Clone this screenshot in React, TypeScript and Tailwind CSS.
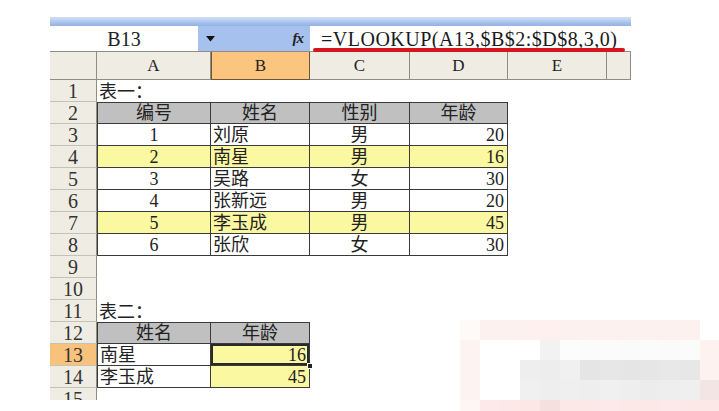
import React from "react";

type Cell = {
  t?: string;
  align?: "l" | "c" | "r";
  fill?: "head" | "yellow";
  box?: boolean;
  top?: boolean;
  sel?: boolean;
};

const colW = ["w-[114px]", "w-[99px]", "w-[100px]", "w-[98px]", "w-[99px]", "w-[24px]"];
const colNames = ["A", "B", "C", "D", "E", ""];

const font = "font-['Liberation_Serif','Noto_Sans_CJK_SC',serif]";

const table1 = [
  ["1", "刘原", "男", "20"],
  ["2", "南星", "男", "16"],
  ["3", "吴路", "女", "30"],
  ["4", "张新远", "男", "20"],
  ["5", "李玉成", "男", "45"],
  ["6", "张欣", "女", "30"],
];

function buildRows(): Cell[][] {
  const rows: Cell[][] = [];
  rows.push([{ t: "表一：", align: "l" }]);
  rows.push(
    ["编号", "姓名", "性别", "年龄"].map((t) => ({ t, align: "c", fill: "head", box: true, top: true }) as Cell)
  );
  table1.forEach((r, idx) => {
    const yellow = idx === 1 || idx === 4;
    rows.push([
      { t: r[0], align: "c", box: true, fill: yellow ? "yellow" : undefined },
      { t: r[1], align: "l", box: true, fill: yellow ? "yellow" : undefined },
      { t: r[2], align: "c", box: true, fill: yellow ? "yellow" : undefined },
      { t: r[3], align: "r", box: true, fill: yellow ? "yellow" : undefined },
    ]);
  });
  rows.push([]);
  rows.push([]);
  rows.push([{ t: "表二：", align: "l" }]);
  rows.push([
    { t: "姓名", align: "c", fill: "head", box: true, top: true },
    { t: "年龄", align: "c", fill: "head", box: true, top: true },
  ]);
  rows.push([
    { t: "南星", align: "l", box: true },
    { t: "16", align: "r", fill: "yellow", box: true, sel: true },
  ]);
  rows.push([
    { t: "李玉成", align: "l", box: true },
    { t: "45", align: "r", fill: "yellow", box: true },
  ]);
  rows.push([]);
  return rows;
}

function SheetCell({ c, i }: { c?: Cell; i: number }) {
  let cls = `${colW[i]} shrink-0 h-full flex items-end pb-[1px] leading-none relative text-[18px] text-[#222] ${font}`;
  if (c?.align === "l") cls += " justify-start pl-[2px]";
  if (c?.align === "c") cls += " justify-center";
  if (c?.align === "r") cls += " justify-end pr-[3px]";
  if (c?.fill === "head") cls += " bg-[#c0c0c0]";
  else if (c?.fill === "yellow") cls += " bg-[#fbf8a2]";
  else cls += " bg-white";
  if (c?.box) {
    cls += " border-r border-b border-[#3a3a3a]";
    if (c.top) cls += " border-t";
    if (i === 0) cls += " border-l";
  }
  return (
    <div className={cls}>
      {c?.t}
      {c?.sel && (
        <>
          <span className="absolute inset-0 shadow-[inset_0_0_0_2px_#2a2a2a]" />
          <span className="absolute -right-[4px] -bottom-[4px] w-[6px] h-[6px] bg-[#222] border border-white z-10" />
        </>
      )}
    </div>
  );
}

const mosaic: string[][] = [
  ["#fefaf8", "#fdf1f0", "#fdf1f0", "#fdf0ef", "#fdf0ef", "#fdf1f0", "#fdf1f0", "#fdf0ef", "#fdf1f0", "#fdf1f0", "#fdf0ef", "#fdf1f0", "#ffffff"],
  ["#fdf4f2", "#ffffff", "#ffffff", "#ffffff", "#f2f2f2", "#fcfcfc", "#fbfbfb", "#fbfbfb", "#fafafa", "#fbfbfb", "#fafafa", "#fbfbfb", "#fdf2f0"],
  ["#fdf4f2", "#ffffff", "#ffffff", "#eeeeee", "#ededed", "#f0f0f0", "#e5e5e5", "#e7e7e7", "#e5e5e5", "#e6e6e6", "#e8e8e8", "#e7e7e7", "#fdf2f0"],
  ["#fdf4f2", "#ffffff", "#ffffff", "#f0f0f0", "#eeeeee", "#efefef", "#eeeeee", "#f0f0f0", "#eeeeee", "#ececec", "#eeeeee", "#efefef", "#f2e5e3"],
  ["#fdf6f4", "#fde9e9", "#fde8e8", "#fce6e6", "#f6dfdf", "#fde8e8", "#fde8e8", "#fde9e9", "#fde8e8", "#fde8e8", "#fde9e9", "#fde8e8", "#fde8e8"],
];

export default function App() {
  const rows = buildRows();
  return (
    <div className="relative w-[719px] h-[411px] bg-white overflow-hidden pl-[50px] pt-[17px]">
      <div className="w-[581px] h-[383px] overflow-hidden flex flex-col">
        {/* window top edge */}
        <div className="h-[9px] shrink-0 bg-linear-to-b from-[#d3e0f5] to-[#90b0e6]" />

        {/* formula bar */}
        <div className="relative h-[26px] shrink-0 flex border-b border-[#8f8d82]">
          <div className={`w-[148px] bg-white flex items-center justify-center text-[20px] text-[#222] ${font}`}>
            B13
          </div>
          <div className="w-[112px] bg-[#a7c1ee] flex items-center justify-between pl-[8px] pr-[7px]">
            <svg width="9" height="6" viewBox="0 0 9 6">
              <path d="M0 0 L9 0 L4.5 5.5 Z" fill="#111" />
            </svg>
            <span className="font-['Liberation_Serif',serif] italic font-bold text-[15px] text-[#222] tracking-[-1px]">fx</span>
          </div>
          <div
            className={`flex-1 bg-white flex items-center pl-[11px] text-[20px] tracking-[0.5px] text-[#1a1a1a] ${font}`}
          >
            =VLOOKUP(A13,$B$2:$D$8,3,0)
          </div>
          <span className="absolute left-[263px] top-[22px] w-[312px] h-[4px] bg-[#d6161d] rounded-full z-10" />
        </div>

        {/* column headers */}
        <div className="h-[28px] shrink-0 flex">
          <div className="w-[47px] shrink-0 bg-[#efede3] border-r border-b border-[#8f8d82]" />
          {colNames.map((n, i) => (
            <div
              key={i}
              className={`${colW[i]} shrink-0 flex items-center justify-center text-[17px] text-[#222] ${font} ${
                i === 1
                  ? "bg-[#fbc47f] border border-t-0 border-[#6b5636]"
                  : "bg-[#efede3] border-r border-b border-[#8f8d82]"
              }`}
            >
              {n}
            </div>
          ))}
        </div>

        {/* rows */}
        {rows.map((r, ri) => (
          <div key={ri} className="h-[22px] shrink-0 flex">
            <div
              className={`w-[47px] shrink-0 h-full flex items-center justify-center border-r border-b border-r-[#8f8d82] border-b-[#c4c2b6] font-['Liberation_Serif',serif] text-[20px] leading-none text-[#333] ${
                ri === 12 ? "bg-[#f9c27c]" : "bg-[#efede3]"
              }`}
            >
              {ri + 1}
            </div>
            {colW.map((_, ci) => (
              <SheetCell key={ci} c={r[ci]} i={ci} />
            ))}
          </div>
        ))}
      </div>

      {/* blurred watermark in the corner */}
      <div className="absolute left-[460px] top-[320px] grid grid-cols-[repeat(13,20px)] grid-rows-[repeat(5,20px)] rounded-tr-[10px] overflow-hidden">
        {mosaic.flatMap((row, ri) =>
          row.map((c, ci) => <div key={`${ri}-${ci}`} className="w-[20px] h-[20px]" style={{ backgroundColor: c }} />)
        )}
      </div>
    </div>
  );
}
